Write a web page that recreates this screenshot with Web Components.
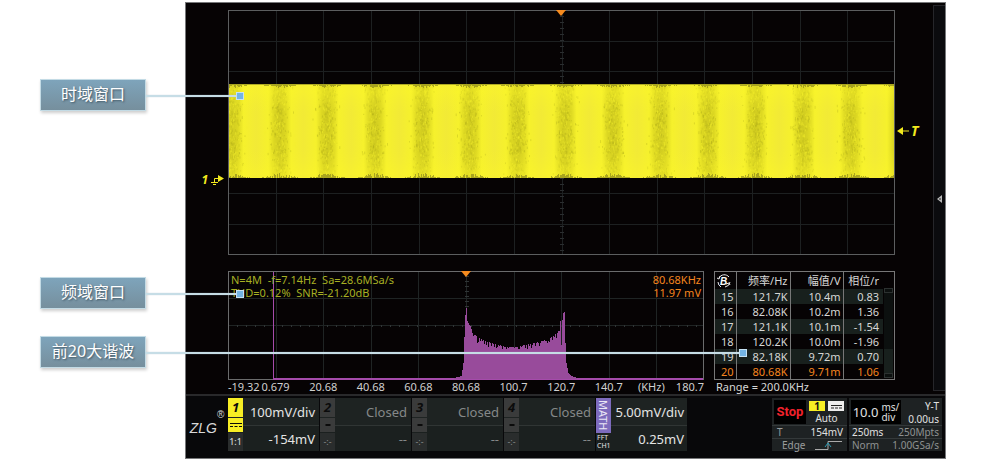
<!DOCTYPE html>
<html lang="zh-CN">
<head>
<meta charset="utf-8">
<title>FFT 频谱分析</title>
<style>
body { margin: 0; background: #fff; font-family: "Noto Sans", "Noto Sans CJK SC", sans-serif; }
</style>
</head>
<body>
<fft-page></fft-page>
<script>
function define(name, html, setup) {
  const t = document.createElement('template');
  t.innerHTML = html;
  customElements.define(name, class extends HTMLElement {
    constructor() {
      super();
      this.attachShadow({ mode: 'open' }).appendChild(t.content.cloneNode(true));
    }
    connectedCallback() { if (setup) setup(this, this.shadowRoot); }
  });
}
function random(seed) {
  return () => (seed = (seed * 16807) % 2147483647) / 2147483647;
}
function grid(w, h, cols, rows) {
  let d = '';
  for (let i = 1; i < cols; i++) d += `M${Math.round(w * i / cols)} 0V${h}`;
  for (let i = 1; i < rows; i++) d += `M0 ${Math.round(h * i / rows)}H${w}`;
  return d;
}

define('call-out', `
<style>
:host { display: block; position: relative; }
.label { box-sizing: border-box; height: 32px; border: 1px solid #c3dbe5; text-align: center;
  background: linear-gradient(#7ea4bb, #768f9d); color: #fff; font-size: 16px; line-height: 28px;
  text-shadow: 1px 1px 2px #3f5563; box-shadow: 1px 2px 3px #0003; white-space: nowrap; }
.line { position: absolute; left: 100%; top: 16px; height: 2px; width: var(--reach);
  background: #c6dde6; box-shadow: 0 0 1px #9fb9c6; }
.line::after { content: ""; position: absolute; right: -5px; top: -3px; width: 6px; height: 6px;
  border: 1px solid #c6e2f4; background: #74b4e4; }
</style>
<div class="label"><slot></slot></div><div class="line"></div>`);

define('time-plot', `
<style>
:host { display: block; height: 245px; }
svg { display: block; width: 100%; height: 100%; }
</style>
<svg viewBox="0 0 667 245" preserveAspectRatio="none" aria-hidden="true">
  <defs>
    <linearGradient id="band">
      <stop offset="0" stop-color="#d0cb20"/><stop offset=".12" stop-color="#dcd722"/><stop offset=".24" stop-color="#f6f12c"/>
      <stop offset=".5" stop-color="#f2ea36"/><stop offset=".76" stop-color="#f6f12c"/><stop offset=".88" stop-color="#dcd722"/><stop offset="1" stop-color="#d0cb20"/>
    </linearGradient>
    <pattern id="bands" x="4" width="47.6" height="245" patternUnits="userSpaceOnUse"><rect width="48" height="245" fill="url(#band)"/></pattern>
    <linearGradient id="fade" x2="0" y2="1">
      <stop offset="0" stop-color="#fbf42c" stop-opacity=".2"/><stop offset=".08" stop-color="#fdf729" stop-opacity=".4"/><stop offset=".3" stop-color="#f8f22e" stop-opacity="0"/>
      <stop offset=".7" stop-color="#f8f22e" stop-opacity="0"/><stop offset=".95" stop-color="#fdf729" stop-opacity=".4"/><stop offset="1" stop-color="#fbf42c" stop-opacity=".3"/>
    </linearGradient>
  </defs>
  <path id="grid" stroke="#1d2021" fill="none" shape-rendering="crispEdges" transform="translate(.5 .5)"/>
  <path id="ticks" stroke="#2a2d2f" fill="none" shape-rendering="crispEdges" transform="translate(.5 .5)"/>
  <rect y="74" width="667" height="94" fill="url(#bands)"/>
  <path id="dark" stroke="#b0ac1a" opacity=".35" fill="none"/>
  <path id="light" stroke="#f4ef2d" opacity=".4" fill="none"/>
  <rect y="74" width="667" height="94" fill="url(#fade)"/>
  <path id="edge" stroke="#827f1b" opacity=".6" fill="none" shape-rendering="crispEdges" transform="translate(.5 0)"/>
  <rect x=".5" y=".5" width="666" height="244" stroke="#5c5e5f" fill="none"/>
  <path d="M328 0h10l-5 6z" fill="#f68b1f"/>
</svg>`, (host, root) => {
  const r = random(77);
  root.getElementById('grid').setAttribute('d', grid(667, 244, 14, 8));
  let d = '';
  for (let y = 6; y < 244; y += 6) d += `M331 ${y}h4`;
  root.getElementById('ticks').setAttribute('d', d);
  const speck = n => {
    let s = '';
    for (let i = 0; i < n; i++) {
      const x = 4 + 47.6 * Math.floor(r() * 14) + (r() + r() + r() - 1.5) * 11;
      if (x > 1 && x < 665) s += `M${x.toFixed(1)} ${(76 + r() * 88).toFixed(1)}v${(1 + r() * 2).toFixed(1)}`;
    }
    return s;
  };
  root.getElementById('dark').setAttribute('d', speck(2600));
  root.getElementById('light').setAttribute('d', speck(2200));
  d = '';
  for (let x = 1; x < 666; x++) {
    const near = (1 + Math.cos((x - 4) / 47.6 * Math.PI * 2)) / 2;
    const t = Math.round(1 + r() * 3 * near), b = Math.round(r() * 5 * near);
    d += `M${x} 74v${t}`;
    if (b) d += `M${x} ${168 - b}v${b}`;
  }
  root.getElementById('edge').setAttribute('d', d);
});

define('spectrum-plot', `
<style>
:host { display: block; color: #a7b023; font-size: 11px; line-height: 13px; }
.plot { position: relative; height: 109px; }
svg { position: absolute; inset: 0; width: 100%; height: 100%; }
.read { position: relative; display: flex; justify-content: space-between; padding: 2px 3px 0; white-space: pre; }
.peak { color: #f5861f; text-align: right; }
.axis { display: grid; grid-template-columns: minmax(0, 1fr) repeat(9, minmax(0, 2fr)) minmax(0, 1fr);
  justify-items: center; color: #d0d0d0; line-height: 14px; white-space: nowrap; }
.axis :first-child { justify-self: start; }
.axis :last-child { justify-self: end; }
.unit { padding-right: 10px; }
</style>
<div class="plot">
  <svg viewBox="0 0 476 109" preserveAspectRatio="none" aria-hidden="true">
    <path id="grid" stroke="#1f2424" fill="none" shape-rendering="crispEdges" transform="translate(.5 .5)"/>
    <path id="ticks" stroke="#303536" fill="none" shape-rendering="crispEdges" transform="translate(.5 .5)"/>
    <rect x=".5" y=".5" width="475" height="108" stroke="#6a6b6c" fill="none"/>
    <path d="M45 1h1v107h-1zM45 107h430v2H45z" fill="#a54bab" shape-rendering="crispEdges"/>
    <path id="bars" stroke="#984b9b" fill="none" shape-rendering="crispEdges" transform="translate(.5 0)"/>
    <path d="M233 0h10l-5 6z" fill="#f68b1f"/>
  </svg>
  <div class="read">
    <div><div>N=4M  -f=7.14Hz  Sa=28.6MSa/s</div><div>THD=0.12%  SNR=-21.20dB</div></div>
    <div class="peak"><div>80.68KHz</div><div>11.97 mV</div></div>
  </div>
</div>
<div class="axis"><span>-19.32</span><span>0.679</span><span>20.68</span><span>40.68</span><span>60.68</span><span>80.68</span><span>100.7</span><span>120.7</span><span>140.7</span><span class="unit">(KHz)</span><span>180.7</span></div>
`, (host, root) => {
  root.getElementById('grid').setAttribute('d', grid(476, 108, 10, 4));
  let d = '';
  for (let x = 9; x < 475; x += 9) d += `M${x} 53v2`;
  for (let y = 5; y < 40; y += 5) d += `M236 ${y}h4`;
  root.getElementById('ticks').setAttribute('d', d);
  const env = [[226, 107], [233, 105], [235, 92], [236, 66], [237, 44], [238, 37], [239, 50], [240, 52], [242, 55], [244, 61], [250, 67], [260, 71], [275, 75],
    [285, 76], [297, 74], [310, 71], [320, 68], [326, 63], [331, 59], [332, 50], [334, 49], [335, 42], [336, 41], [337, 72], [338, 92], [340, 102], [343, 105], [349, 107]];
  const r = random(31);
  d = '';
  for (let x = 226; x < 349; x++) {
    const k = env.findIndex(e => e[0] > x), [x0, y0] = env[k - 1], [x1, y1] = env[k];
    let y = y0 + (y1 - y0) * (x - x0) / (x1 - x0);
    if (x > 239 && x < 332) y += Math.pow(r(), 3) * 6;
    if (x === 333) y = 74;
    d += `M${x} ${Math.round(y)}V108`;
  }
  root.getElementById('bars').setAttribute('d', d);
});

define('harmonic-table', `
<style>
:host { display: block; font-size: 11px; color: #d6d7d6; }
.frame { display: flex; box-sizing: border-box; height: 109px; border: 1px solid #777; }
table { flex: 1; min-width: 0; border-collapse: collapse; table-layout: fixed; height: 107px; }
th, td { padding: 0 2px 0 0; text-align: right; font-weight: 400; line-height: 15px; height: 15px; white-space: nowrap; border-right: 1px solid #777; }
th { line-height: 17px; height: 17px; }
th:last-child, td:last-child { border-right: 0; padding-right: 4px; }
tbody tr:nth-child(odd) { background: #18201d; }
tbody tr:last-child { color: #f5861f; }
svg { display: block; margin: 0 auto; }
.scroll { width: 9px; margin: 16px 1px 1px; display: flex; flex-direction: column; justify-content: space-between; background: #0c100f; }
.scroll i { height: 3px; border: 1px solid #2c3130; }
.thumb { flex: 1; margin-top: 56px; background: #18201d; }
.range { font-size: 11px; line-height: 14px; padding-left: 2px; }
</style>
<div class="frame">
  <table>
    <colgroup><col style="width:21px"><col style="width:54px"><col style="width:53px"><col></colgroup>
    <thead><tr><th><svg width="16" height="16" viewBox="0 0 16 16" fill="none" stroke="#eee" aria-hidden="true"><path d="M3 5a6 6 0 0 1 10-1M14 9a6 6 0 0 1-5 5M5 14a6 6 0 0 1-3-5M1 5l2 1 1-3M14 12l-1-2-3 1"/><text x="4" y="12" font-family="Liberation Sans" font-size="10" font-weight="700" font-style="italic" fill="#fff" stroke="none">B</text></svg></th><th>频率/Hz</th><th>幅值/V</th><th>相位/r</th></tr></thead>
    <tbody>
      <tr><td>15</td><td>121.7K</td><td>10.4m</td><td>0.83</td></tr>
      <tr><td>16</td><td>82.08K</td><td>10.2m</td><td>1.36</td></tr>
      <tr><td>17</td><td>121.1K</td><td>10.1m</td><td>-1.54</td></tr>
      <tr><td>18</td><td>120.2K</td><td>10.0m</td><td>-1.96</td></tr>
      <tr><td>19</td><td>82.18K</td><td>9.72m</td><td>0.70</td></tr>
      <tr><td>20</td><td>80.68K</td><td>9.71m</td><td>1.06</td></tr>
    </tbody>
  </table>
  <div class="scroll"><i></i><div class="thumb"></div><i></i></div>
</div>
<div class="range">Range = 200.0KHz</div>`);

define('channel-card', `
<style>
:host { display: grid; grid-template-columns: 15px 1fr; width: 91px; height: 53px; background: linear-gradient(#1e2322 27px, #303534 27px 28px, #1b201f 28px);
  --chip: #3a3b3b; --ink: #0b0b0b; --text: #858888; color: var(--text); }
:host([active]) { --chip: #f7ee24; --text: #e4e4e4; }
.chips { display: grid; grid-template-rows: 19px 14px 18px; gap: 1px; }
button { border: 0; padding: 0; background: var(--chip); color: var(--ink); font: italic 700 13px/19px "Noto Sans", sans-serif; }
.mode { background: var(--chip); display: grid; place-items: center; }
.ratio { background: #2a2d2d; font-size: 9px; line-height: 18px; text-align: center; }
.values { text-align: right; padding-right: 4px; font-size: 13px; white-space: nowrap; }
.values div { line-height: 29px; height: 27px; }
</style>
<div class="chips"><button type="button"><slot name="num"></slot></button><div class="mode"><svg width="12" height="6" stroke="#0b0b0b"></svg></div><div class="ratio"><slot name="ratio"></slot></div></div>
<div class="values"><div><slot name="scale"></slot></div><div><slot name="offset"></slot></div></div>`, (host, root) => {
  root.querySelector('svg').innerHTML = host.hasAttribute('active')
    ? '<path d="M0 1.500h12M0 4.500h3M4.500 4.500h3M9 4.500h3"/>' : '<path d="M3.500 3h5" stroke-width="2"/>';
});

define('math-card', `
<style>
:host { display: grid; grid-template-columns: 15px 1fr; width: 91px; height: 53px; color: #e4e4e4; background: linear-gradient(#1e2322 27px, #303534 27px 28px, #1b201f 28px); }
button { display: block; width: 15px; height: 35px; border: 0; padding: 0; background: #7d6bbd; color: #e9e6f5; writing-mode: vertical-rl; font: 11px/15px "Noto Sans", sans-serif; }
.src { font-size: 7px; line-height: 8px; padding: 1px 0 0 1px; }
.values { text-align: right; padding-right: 3px; font-size: 13px; white-space: nowrap; }
.values div { line-height: 29px; height: 27px; }
</style>
<div><button type="button">MATH</button><div class="src">FFT<br>CH1</div></div>
<div class="values"><div>5.00mV/div</div><div>0.25mV</div></div>`);

define('trigger-card', `
<style>
:host { display: block; width: 75px; height: 53px; background: #1e2223; color: #e0e0e0; font-size: 10px; }
.top { display: grid; grid-template-columns: 32px 1fr; gap: 3px; height: 25px; padding: 2px 3px 0 2px; }
button { border: 0; padding: 0; background: #000; color: #f0222c; height: 24px; font: 700 13px/24px Roboto, sans-serif; }
.chips { display: flex; gap: 3px; padding-top: 1px; }
.chips span { flex: 1; height: 10px; background: #f7ee24; color: #111; font-weight: 700; line-height: 10px; text-align: center; }
.chips .dc { background: #eee; display: grid; place-items: center; }
.auto { line-height: 15px; text-align: center; }
.row { display: flex; justify-content: space-between; align-items: center; height: 12px; border-top: 1px solid #34393a; padding: 0 4px 0 5px; line-height: 12px; }
.dim { color: #9a9c9c; }
.edge { padding-left: 10px; }
</style>
<div class="top"><button type="button">Stop</button><div><div class="chips"><span>1</span><span class="dc"><svg width="11" height="5" stroke="#222"><path d="M0 1.500h11M0 4h3M4 4h3M8 4h3"/></svg></span></div><div class="auto">Auto</div></div></div>
<div class="row"><span class="dim">T</span><span>154mV</span></div>
<div class="row edge dim"><span>Edge</span><svg width="28" height="11" fill="none" stroke="#aaa"><path d="M0 9.500h13V1.500h14"/><path d="M10 7l3-4 3 4" stroke="#2a9db5"/></svg></div>`);

define('timebase-card', `
<style>
:host { display: block; width: 93px; height: 53px; background: #1e2223; color: #e0e0e0; font-size: 10px; }
.top { display: flex; justify-content: space-between; height: 25px; padding: 2px 3px 0 2px; }
.div { display: flex; gap: 3px; align-items: center; justify-content: center; width: 50px; height: 24px; background: #000; font-size: 13px; }
.div small { font-size: 10px; line-height: 10px; }
.off { text-align: right; line-height: 12px; }
.off div + div { padding-top: 1px; }
.row { display: flex; justify-content: space-between; height: 12px; border-top: 1px solid #34393a; padding: 0 3px; line-height: 12px; }
.dim { color: #8f9292; }
</style>
<div class="top"><div class="div"><span>10.0</span><small>ms/<br>div</small></div><div class="off"><div>Y-T</div><div>0.00us</div></div></div>
<div class="row"><span>250ms</span><span class="dim">250Mpts</span></div>
<div class="row dim"><span>Norm</span><span>1.00GSa/s</span></div>`);

define('brand-mark', `
<style>
:host { display: flex; justify-content: center; color: #d8d8d8; font: italic 14px/20px "Liberation Sans", sans-serif; }
span { padding-top: 20px; }
sup { font-size: 10px; line-height: 10px; padding-top: 12px; font-style: normal; }
</style>
<span>ZLG</span><sup>®</sup>`);

define('scope-screen', `
<style>
:host { display: block; background: #060304; border: 1px solid #77787a; color: #ddd; box-sizing: border-box; }
.main { display: flex; height: 391px; }
.work { flex: 1; min-width: 0; padding-top: 7px; }
.upper { display: grid; grid-template-columns: 42px minmax(0, 1fr) 38px; }
.left { padding: 163px 4px 0 0; text-align: right; }
.right { padding: 114px 0 0 2px; }
.mark { color: #f2ea1e; font: italic 700 12px/14px "Noto Sans", sans-serif; display: flex; gap: 2px; align-items: center; }
.left .mark { justify-content: flex-end; }
.right .mark { font-size: 14px; }
.lower { display: grid; grid-template-columns: minmax(0, 1fr) 181px; gap: 10px; margin: 16px 38px 0 42px; }
.side { box-sizing: border-box; width: 12px; margin: 2px 0 3px; border: 1px solid #26262a; border-right: 0; background: #0b0b0e; padding-top: 187px; }
.side button { display: block; width: 11px; height: 14px; padding: 0; border: 0; background: none; }
.bar { display: flex; height: 64px; box-sizing: border-box; border-top: 2px solid #29292b; padding-top: 2px; background: #08080a; }
brand-mark { width: 42px; height: 53px; }
.cards { display: flex; gap: 1px; flex: 1; }
.info { display: flex; gap: 2px; padding-right: 3px; }
</style>
<div class="main">
  <div class="work">
    <div class="upper">
      <div class="left"><div class="mark"><span>1</span><svg width="14" height="12" fill="none" stroke="#f2ea1e" aria-hidden="true"><path d="M8 4.500H4.500V9M1 8.500h7M3 10.500h3"/><path d="M8 1l6 3.500L8 8z" fill="#f2ea1e" stroke="none"/></svg></div></div>
      <time-plot></time-plot>
      <div class="right"><div class="mark"><svg width="12" height="10" stroke="#f2ea1e" aria-hidden="true"><path d="M4 5h8"/><path d="M0 5l6-4v8z" fill="#f2ea1e" stroke="none"/></svg><span>T</span></div></div>
    </div>
    <div class="lower"><spectrum-plot></spectrum-plot><harmonic-table></harmonic-table></div>
  </div>
  <div class="side"><button type="button" aria-label="展开"><svg width="11" height="12"><path d="M8 2v8L3 6z" fill="#b8b8b8"/><path d="M6 5v2" stroke="#222"/></svg></button></div>
</div>
<div class="bar">
  <brand-mark></brand-mark>
  <div class="cards">
    <channel-card active><span slot="num">1</span><span slot="ratio">1:1</span><span slot="scale">100mV/div</span><span slot="offset">-154mV</span></channel-card>
    <channel-card><span slot="num">2</span><span slot="ratio">-:-</span><span slot="scale">Closed</span><span slot="offset">--</span></channel-card>
    <channel-card><span slot="num">3</span><span slot="ratio">-:-</span><span slot="scale">Closed</span><span slot="offset">--</span></channel-card>
    <channel-card><span slot="num">4</span><span slot="ratio">-:-</span><span slot="scale">Closed</span><span slot="offset">--</span></channel-card>
    <math-card></math-card>
  </div>
  <div class="info"><trigger-card></trigger-card><timebase-card></timebase-card></div>
</div>`);

define('fft-page', `
<style>
:host { display: flex; padding: 2px 54px 0 0; }
.notes { position: relative; z-index: 1; width: 106px; padding: 77px 39px 0 40px; flex: none; }
call-out { --reach: 93px; }
.freq { margin-top: 166px; }
.harm { margin-top: 27px; --reach: calc(100vw - 404px); }
scope-screen { flex: 1; min-width: 0; }
</style>
<div class="notes"><call-out>时域窗口</call-out><call-out class="freq">频域窗口</call-out><call-out class="harm">前20大谐波</call-out></div>
<scope-screen></scope-screen>`);
</script>
</body>
</html>
